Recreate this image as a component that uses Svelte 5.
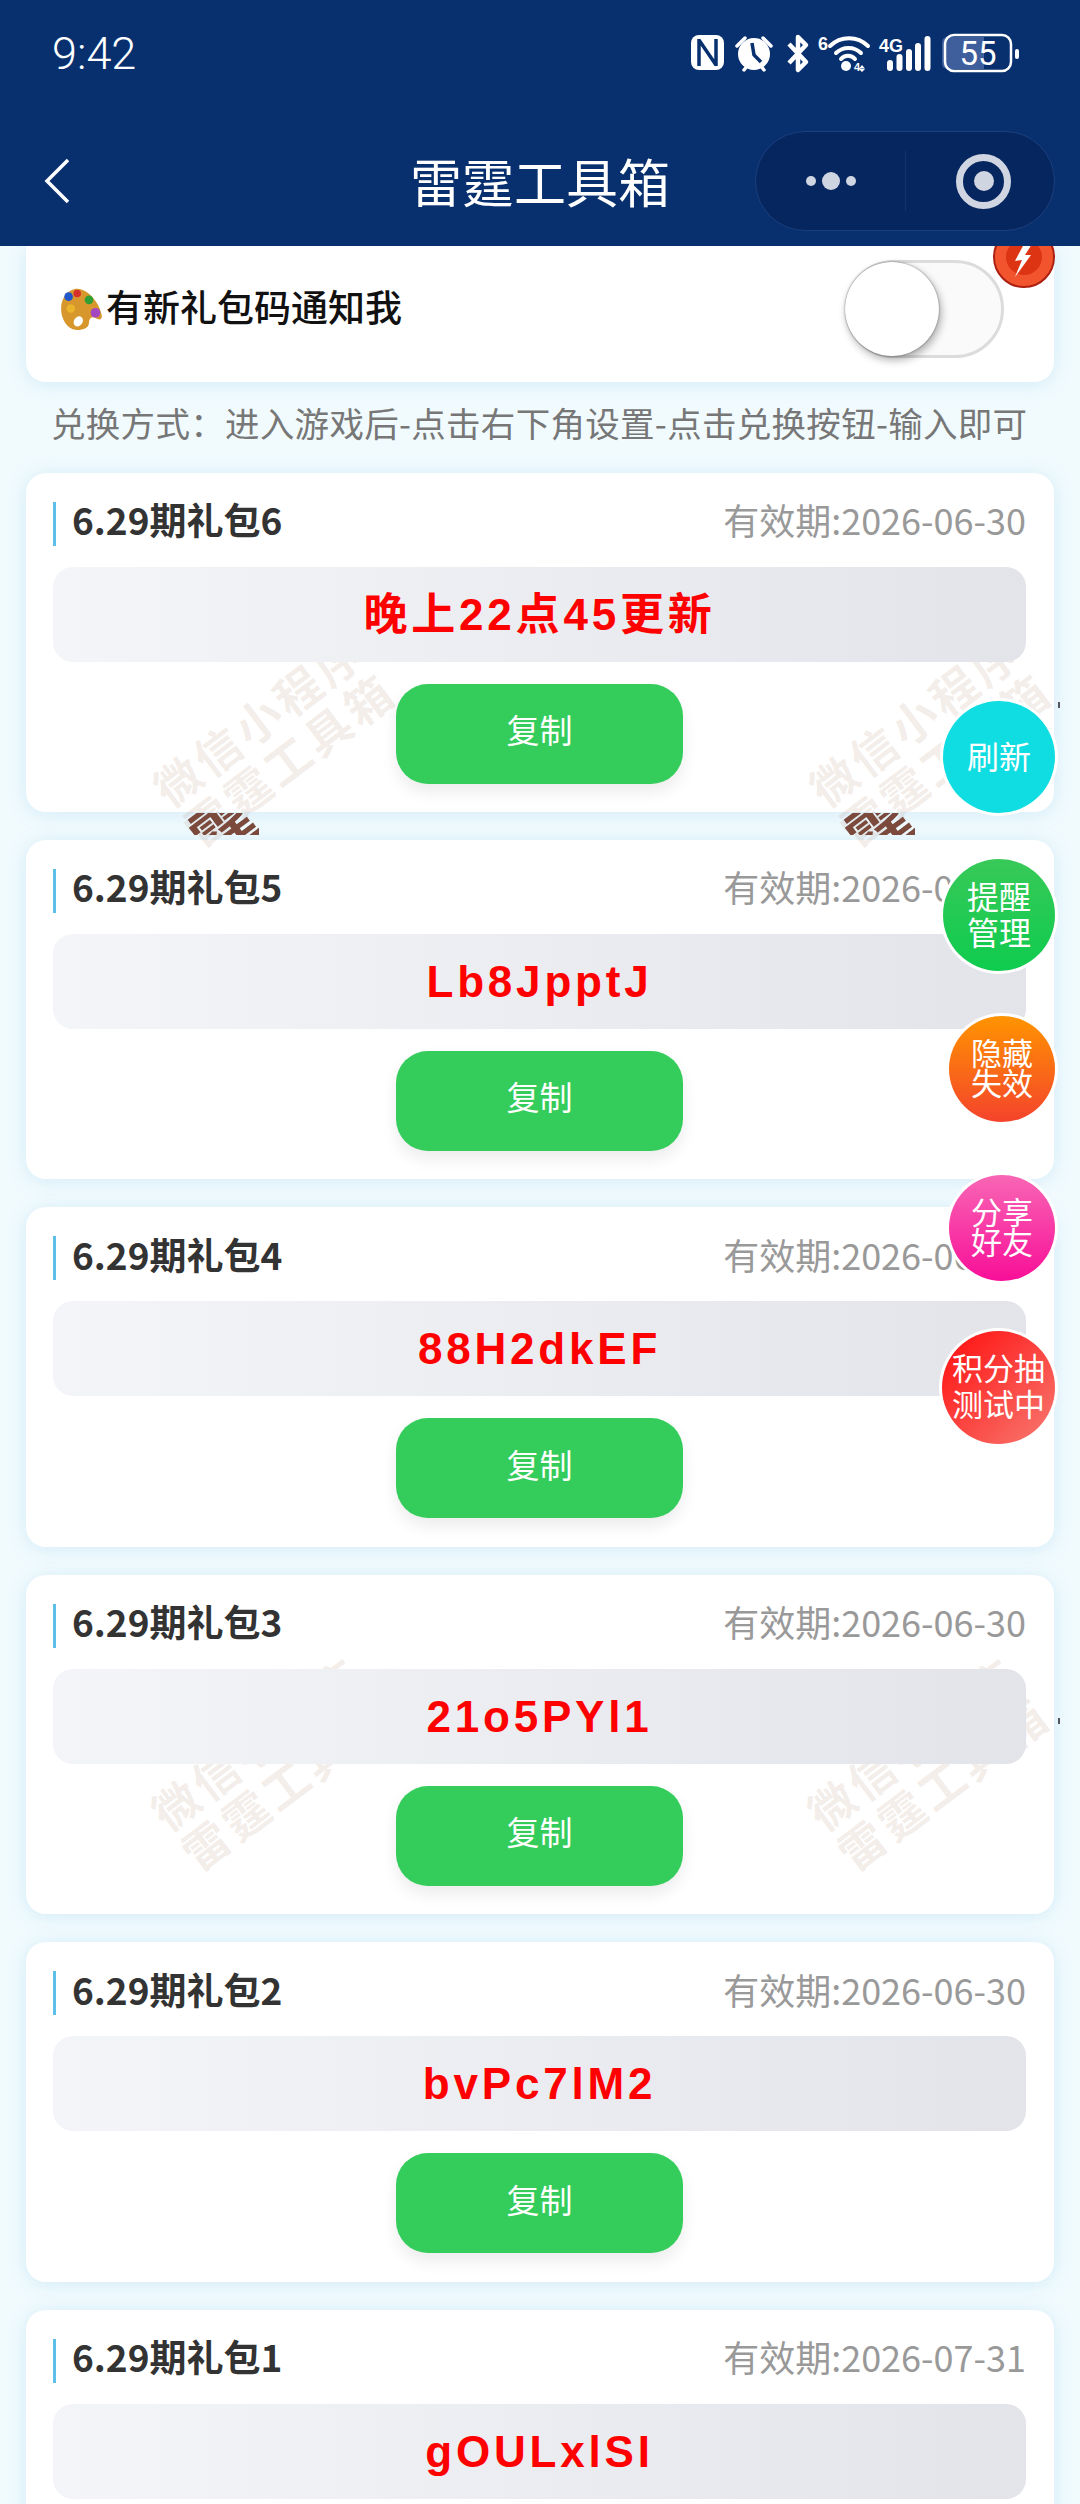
<script>
  const gifts = [
    { name: '6.29期礼包6', date: '2026-06-30', code: '晚上22点45更新' },
    { name: '6.29期礼包5', date: '2026-06-30', code: 'Lb8JpptJ' },
    { name: '6.29期礼包4', date: '2026-06-30', code: '88H2dkEF' },
    { name: '6.29期礼包3', date: '2026-06-30', code: '21o5PYl1' },
    { name: '6.29期礼包2', date: '2026-06-30', code: 'bvPc7lM2' },
    { name: '6.29期礼包1', date: '2026-07-31', code: 'gOULxlSI' }
  ];

  const floats = [
    { cls: 'cyan', lines: ['刷新'] },
    { cls: 'green', lines: ['提醒', '管理'] },
    { cls: 'orange', lines: ['隐藏', '失效'] },
    { cls: 'pink', lines: ['分享', '好友'] },
    { cls: 'red', lines: ['积分抽', '测试中'] }
  ];

  const marks = ['a', 'b', 'c', 'd'];
</script>

<div class="page">
  <header class="top">
    <div class="status">
      <span class="time">9:42</span>
      <svg class="sys" viewBox="0 0 336 42" width="336" height="42" aria-hidden="true">
        <!-- nfc -->
        <rect x="3" y="3" width="33" height="35" rx="8" fill="#fff" />
        <path d="M11 7v27M28 7v27M11 8l17 25" stroke="#08306f" stroke-width="3.500" fill="none" />
        <!-- alarm -->
        <circle cx="66" cy="22" r="16" fill="#fff" />
        <path d="M49 14l8-8M83 14l-8-8M56 38l4-5M76 38l-4-5" stroke="#fff" stroke-width="3.500" fill="none" stroke-linecap="round" />
        <path d="M64 11l2 12 7 7" stroke="#08306f" stroke-width="3.500" fill="none" />
        <!-- bluetooth -->
        <path d="M101 12l17 18-8 8V5l8 8-17 18" stroke="#fff" stroke-width="4.500" fill="none" stroke-linejoin="round" />
        <!-- wifi -->
        <text x="130" y="18" class="tiny">6</text>
        <path d="M142 14a27 27 0 0 1 38 0M148 21a18 18 0 0 1 25 0M153 27a9 9 0 0 1 14 0" stroke="#fff" stroke-width="4" fill="none" stroke-linecap="round" />
        <circle cx="158" cy="34" r="5" fill="#fff" />
        <text x="166" y="39" class="micro">4</text>
        <path d="M174 33l3 3.500h-6zM174 40l3-3h-6z" fill="#fff" />
        <!-- cell -->
        <text x="191" y="20" class="tiny">4G</text>
        <rect x="199" y="28" width="6" height="11" rx="3" fill="#fff" />
        <rect x="208.500" y="22" width="6" height="17" rx="3" fill="#fff" />
        <rect x="218" y="17" width="6" height="22" rx="3" fill="#fff" />
        <rect x="227" y="11" width="6" height="28" rx="3" fill="#fff" />
        <rect x="236.500" y="4" width="6" height="35" rx="3" fill="#fff" />
        <!-- battery -->
        <path d="M259 5h37v32h-37a5 5 0 0 1-5-5v-22a5 5 0 0 1 5-5z" fill="#3f5e9c" />
        <rect x="257" y="3" width="66" height="36" rx="9" fill="none" stroke="#fff" stroke-width="2.500" />
        <text x="290" y="33" class="batt">55</text>
        <rect x="327" y="17" width="4" height="10" rx="2" fill="#fff" />
      </svg>
    </div>
    <div class="nav">
      <svg class="back" viewBox="0 0 28 46" width="28" height="46" aria-hidden="true">
        <path d="M25 2L4 23l21 21" stroke="#fff" stroke-width="3.500" fill="none" />
      </svg>
      <div class="title">雷霆工具箱</div>
      <div class="capsule">
        <span class="more"><i></i><b></b><i></i></span>
        <span class="split"></span>
        <span class="target"><em></em></span>
      </div>
    </div>
  </header>

  <main class="content">
    <section class="notify">
      <svg class="palette" viewBox="0 0 40 41" width="43" height="44" aria-hidden="true">
        <path d="M13 2C24-1 37 14 39 27c0 4-3 4-6 2s-6 0-6 4c0 5-5 7-11 7C7 40 1 30 1 20 1 11 6 4 13 2z" fill="#d7972c" />
        <ellipse cx="17" cy="32" rx="4" ry="5" transform="rotate(35 17 32)" fill="#fff" />
        <circle cx="8" cy="9" r="4" fill="#2257c9" />
        <circle cx="16" cy="6" r="3.500" fill="#d6302a" />
        <circle cx="27" cy="12" r="4" fill="#2f9e35" />
        <circle cx="10" cy="20" r="4" fill="#eab52a" />
        <circle cx="33" cy="24" r="4.500" fill="#a348c0" />
      </svg>
      <span class="notify-text">有新礼包码通知我</span>
      <div class="switch"><span class="knob"></span></div>
    </section>

    <p class="hint">兑换方式：进入游戏后-点击右下角设置-点击兑换按钮-输入即可</p>

    <div class="list">
      {#each gifts as gift}
        <article class="card">
          <div class="card-head">
            <span class="name">{gift.name}</span>
            <span class="date">有效期:{gift.date}</span>
          </div>
          <div class="code">{gift.code}</div>
          <button class="copy">复制</button>
        </article>
      {/each}
    </div>
  </main>

  <!-- watermark sits over the cards but under code boxes and buttons -->
  <div class="marks">
    {#each marks as m}
      <div class="mark {m}"><span>微信小程序</span><span>雷霆工具箱</span></div>
    {/each}
  </div>
  <div class="blot left"><span>霆</span></div>
  <div class="blot right"><span>霆</span></div>
  <i class="speck one"></i>
  <i class="speck two"></i>

  <svg class="badge" viewBox="0 0 62 62" width="62" height="62" aria-hidden="true">
    <circle cx="31" cy="31" r="30" fill="#f2552e" stroke="#ad1f10" stroke-width="2" />
    <circle cx="31" cy="31" r="18" fill="#dd3514" />
    <path d="M39 18h-8l-9 17 7-1-7 17 16-22-6 0z" fill="#fff" />
  </svg>

  <div class="floats">
    {#each floats as f}
      <div class="float {f.cls}">
        {#each f.lines as line}<span>{line}</span>{/each}
      </div>
    {/each}
  </div>
</div>

<style>
  :global(body) {
    margin: 0;
    background: #f1fbfe;
  }

  .page {
    position: relative;
    width: 1080px;
    height: 2504px;
    overflow: hidden;
    background: #f1fbfe;
    font-family: "Noto Sans CJK SC", "Noto Sans", sans-serif;
  }

  .top {
    position: relative;
    z-index: 5;
    height: 246px;
    background: #08306f;
    color: #fff;
  }

  .status {
    height: 106px;
    padding: 0 57px 0 52px;
    display: flex;
    align-items: center;
    justify-content: space-between;
  }

  .time {
    font-family: Roboto, sans-serif;
    font-weight: 300;
    font-size: 45px;
  }

  .sys {
    margin-right: -1px;
  }

  .tiny {
    font-family: "Liberation Sans", sans-serif;
    font-weight: 700;
    font-size: 18px;
    fill: #fff;
  }

  .micro {
    font-family: "Liberation Sans", sans-serif;
    font-weight: 700;
    font-size: 11px;
    fill: #fff;
  }

  .batt {
    font-family: Roboto, sans-serif;
    font-size: 33px;
    fill: #fff;
    text-anchor: middle;
  }

  .nav {
    margin-top: 25px;
    height: 100px;
    padding: 0 25px;
    display: grid;
    grid-template-columns: 1fr auto 1fr;
    align-items: center;
  }

  .back {
    margin-left: 18px;
  }

  .title {
    font-size: 52px;
    line-height: 60px;
  }

  .capsule {
    justify-self: end;
    box-sizing: border-box;
    width: 300px;
    height: 100px;
    border: 1px solid #1c3f7d;
    border-radius: 50px;
    background: #06265f;
    display: flex;
    align-items: center;
  }

  .more {
    width: 149px;
    display: flex;
    justify-content: center;
    align-items: center;
    gap: 6px;
  }

  .more i,
  .more b {
    display: block;
    border-radius: 50%;
    background: #d0d5e2;
  }

  .more i {
    width: 10px;
    height: 10px;
  }

  .more b {
    width: 18px;
    height: 18px;
  }

  .split {
    width: 1px;
    height: 60px;
    background: #12356f;
  }

  .target {
    box-sizing: border-box;
    margin-left: 50px;
    width: 55px;
    height: 55px;
    border: 7px solid #d0d5e2;
    border-radius: 50%;
    display: flex;
    align-items: center;
    justify-content: center;
  }

  .target em {
    width: 20px;
    height: 20px;
    border-radius: 50%;
    background: #d0d5e2;
  }

  .content {
    padding: 0 26px;
  }

  .notify {
    box-sizing: border-box;
    height: 136px;
    padding: 0 50px 10px 34px;
    display: flex;
    align-items: center;
    background: #fff;
    border-radius: 0 0 20px 20px;
    box-shadow: 0 2px 20px rgba(60, 150, 210, 0.16);
  }

  .palette {
    flex: none;
    margin-right: 3px;
  }

  .notify-text {
    flex: 1;
    margin-bottom: 6px;
    font-size: 37px;
    font-weight: 500;
    color: #111;
  }

  .switch {
    box-sizing: border-box;
    width: 159px;
    height: 98px;
    border: 3px solid #dcdcdc;
    border-radius: 49px;
    background: #fafafa;
    display: flex;
    align-items: center;
  }

  .knob {
    width: 94px;
    height: 94px;
    margin-left: -3px;
    border-radius: 50%;
    background: #fff;
    box-shadow: 0 0 2px rgba(0, 0, 0, 0.5), 2px 4px 9px rgba(0, 0, 0, 0.32);
  }

  .hint {
    box-sizing: border-box;
    margin: 0;
    height: 90.6px;
    padding: 0 25px 11px;
    display: flex;
    align-items: center;
    font-size: 34.5px;
    letter-spacing: 0.3px;
    white-space: nowrap;
    color: #777;
  }

  .list {
    display: flex;
    flex-direction: column;
    gap: 28px;
  }

  .card {
    box-sizing: border-box;
    height: 339.4px;
    flex: none;
    padding: 29px 28px 0 27px;
    display: flex;
    flex-direction: column;
    align-items: center;
    background: #fff;
    border-radius: 20px;
    box-shadow: 0 2px 20px rgba(60, 150, 210, 0.16);
  }

  .card-head {
    align-self: stretch;
    height: 44px;
    display: flex;
    align-items: center;
    justify-content: space-between;
  }

  .name {
    height: 44px;
    padding: 0 0 9px 16px;
    border-left: 3px solid #5cc0e8;
    box-sizing: border-box;
    display: flex;
    align-items: center;
    font-size: 37px;
    font-weight: 700;
    color: #333;
  }

  .date {
    margin-bottom: 9px;
    font-size: 36px;
    color: #999;
  }

  .code {
    position: relative;
    z-index: 2;
    align-self: stretch;
    margin-top: 21px;
    height: 95px;
    line-height: 95px;
    text-align: center;
    white-space: nowrap;
    border-radius: 20px;
    background: linear-gradient(90deg, #f4f5f8, #e3e4ea);
    font-family: "Liberation Sans", "Noto Sans CJK SC", sans-serif;
    font-weight: 700;
    font-size: 44px;
    letter-spacing: 3.8px;
    color: #f00;
  }

  .copy {
    position: relative;
    z-index: 2;
    margin-top: 22px;
    width: 287px;
    height: 100px;
    border: 0;
    padding: 0 0 9px;
    border-radius: 32px;
    background: #34cc5a;
    box-shadow: 0 8px 16px rgba(0, 0, 0, 0.08);
    color: #fff;
    font-family: inherit;
    font-size: 33px;
  }

  .marks {
    position: absolute;
    left: 0;
    top: 0;
    width: 1054px;
    height: 2504px;
    overflow: hidden;
    z-index: 1;
    pointer-events: none;
  }

  .mark {
    position: absolute;
    width: 320px;
    height: 100px;
    margin: -50px 0 0 -160px;
    transform: rotate(-37deg);
    display: flex;
    flex-direction: column;
    align-items: center;
    font-size: 46px;
    font-weight: 700;
    line-height: 50px;
    letter-spacing: 4px;
    white-space: nowrap;
    color: rgba(140, 80, 45, 0.1);
  }

  .mark.a { left: 273px; top: 738px; }
  .mark.b { left: 929px; top: 738px; }
  .mark.c { left: 271px; top: 1762px; }
  .mark.d { left: 927px; top: 1762px; }

  .blot {
    position: absolute;
    z-index: 1;
    top: 813px;
    width: 78px;
    height: 22px;
    overflow: hidden;
    font-size: 62px;
    font-weight: 700;
    line-height: 62px;
    color: #7b4a3c;
  }

  .blot span {
    display: block;
    margin: -22px 0 0 8px;
    transform: rotate(-37deg);
  }

  .blot.left { left: 181px; }
  .blot.right { left: 837px; }

  .speck {
    position: absolute;
    left: 1058px;
    width: 2px;
    height: 6px;
    background: #556;
  }

  .speck.one { top: 702px; }
  .speck.two { top: 1718px; }

  .badge {
    position: absolute;
    z-index: 3;
    left: 993px;
    top: 226px;
  }

  .floats {
    position: absolute;
    z-index: 4;
    top: 701px;
    right: 25px;
    display: flex;
    flex-direction: column;
    align-items: flex-end;
  }

  .float {
    box-sizing: border-box;
    padding-bottom: 5px;
    border-radius: 50%;
    box-shadow: 0 0 0 3px #fff;
    display: flex;
    flex-direction: column;
    align-items: center;
    justify-content: center;
    color: #fff;
    font-size: 31px;
    white-space: nowrap;
  }

  .float span {
    height: 36px;
    line-height: 36px;
  }

  .cyan {
    width: 112px;
    height: 112px;
    background: #10dde2;
    font-size: 32px;
  }

  .green {
    margin-top: 46px;
    width: 112px;
    height: 112px;
    background: linear-gradient(180deg, #38c958, #0ecc4e);
    font-size: 32px;
  }

  .orange,
  .pink {
    width: 106px;
    height: 106px;
  }

  .orange {
    margin-top: 45px;
    background: linear-gradient(180deg, #ff9400, #f4432c);
  }

  .pink {
    margin-top: 53px;
    background: linear-gradient(180deg, #f866b4, #f80f98);
  }

  .orange span,
  .pink span {
    height: 30px;
    line-height: 30px;
  }

  .red {
    margin-top: 50px;
    width: 113px;
    height: 113px;
    background: linear-gradient(135deg, #ff0d0d, #f87a72);
  }
</style>
